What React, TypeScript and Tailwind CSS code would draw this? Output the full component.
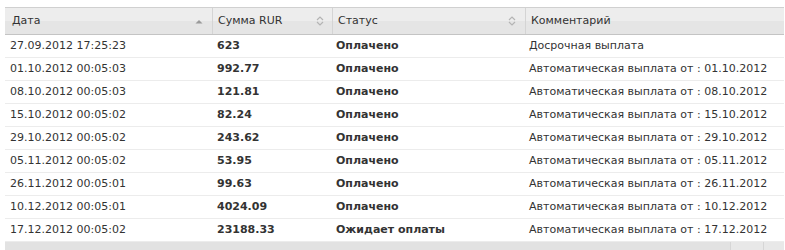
import React from "react";

const rows = [
  ["27.09.2012 17:25:23", "623", "Оплачено", "Досрочная выплата"],
  ["01.10.2012 00:05:03", "992.77", "Оплачено", "Автоматическая выплата от : 01.10.2012"],
  ["08.10.2012 00:05:03", "121.81", "Оплачено", "Автоматическая выплата от : 08.10.2012"],
  ["15.10.2012 00:05:02", "82.24", "Оплачено", "Автоматическая выплата от : 15.10.2012"],
  ["29.10.2012 00:05:02", "243.62", "Оплачено", "Автоматическая выплата от : 29.10.2012"],
  ["05.11.2012 00:05:02", "53.95", "Оплачено", "Автоматическая выплата от : 05.11.2012"],
  ["26.11.2012 00:05:01", "99.63", "Оплачено", "Автоматическая выплата от : 26.11.2012"],
  ["10.12.2012 00:05:01", "4024.09", "Оплачено", "Автоматическая выплата от : 10.12.2012"],
  ["17.12.2012 00:05:02", "23188.33", "Ожидает оплаты", "Автоматическая выплата от : 17.12.2012"],
];

function SortBoth() {
  return (
    <svg width="8" height="10" viewBox="0 0 8 10" className="shrink-0">
      <path d="M1 4 L4 1 L7 4" fill="none" stroke="#b4b4b4" strokeWidth="1.2" />
      <path d="M1 6 L4 9 L7 6" fill="none" stroke="#b4b4b4" strokeWidth="1.2" />
    </svg>
  );
}

function SortUp() {
  return (
    <svg width="8" height="5" viewBox="0 0 8 5" className="shrink-0">
      <path d="M0.5 4.5 L4 1 L7.5 4.5 Z" fill="#9a9a9a" />
    </svg>
  );
}

export default function App() {
  return (
    <div
      className="w-[785px] h-[250px] overflow-hidden bg-white pl-[5px] pt-[7px] text-[11px] text-[#333]"
      style={{ fontFamily: '"DejaVu Sans", Verdana, sans-serif' }}
    >
      <div className="w-[779px]">
        <div className="flex h-[28px] border-t border-b border-t-[#d0d0d0] border-b-[#c4c4c4] bg-[linear-gradient(#ededed_50%,#e5e5e5_50%)]">
          <div className="w-[208px] flex items-center justify-between pl-[7px] pr-[9px] border-r border-[#d4d4d4]">
            <span>Дата</span>
            <SortUp />
          </div>
          <div className="w-[120px] flex items-center justify-between pl-[5px] pr-[8px] border-r border-[#d4d4d4]">
            <span>Сумма RUR</span>
            <SortBoth />
          </div>
          <div className="w-[193px] flex items-center justify-between pl-[5px] pr-[9px] border-r border-[#d4d4d4]">
            <span>Статус</span>
            <SortBoth />
          </div>
          <div className="flex-1 flex items-center pl-[5px]">
            <span>Комментарий</span>
          </div>
        </div>
        {rows.map((r, i) => (
          <div key={i} className="flex h-[23px] items-center border-b border-[#ececec]">
            <div className="w-[208px] pl-[5px]">{r[0]}</div>
            <div className="w-[120px] pl-[4px] font-bold">{r[1]}</div>
            <div className="w-[193px] pl-[3px] font-bold">{r[2]}</div>
            <div className="flex-1 pl-[3px]">{r[3]}</div>
          </div>
        ))}
        <div className="flex h-[10px] bg-[#e2e2e2]">
          <div className="flex-1" />
          <div className="w-[33px] border-l border-[#d6d6d6] bg-[#e8e8e8]" />
          <div className="w-[21px] border-l border-[#d6d6d6] bg-[#e8e8e8]" />
        </div>
      </div>
    </div>
  );
}
